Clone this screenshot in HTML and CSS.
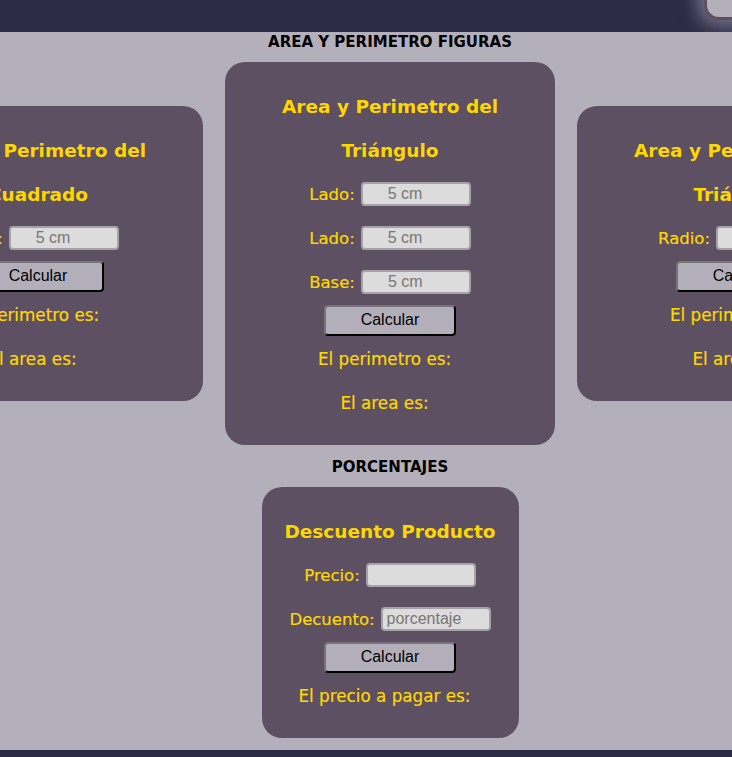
FILE: index.html
```html
<!DOCTYPE html>
<html lang="es">
<head>
<meta charset="utf-8">
<title>Figuras</title>
<link rel="stylesheet" href="styles.css">
</head>
<body>
<header class="topbar">
  <div class="nav-box"></div>
</header>
<main class="page">
  <h1 class="section-title">AREA Y PERIMETRO FIGURAS</h1>
  <div class="row">
    <section class="card">
      <h2 class="card-title">Area y Perimetro del Cuadrado</h2>
      <div class="field"><label>Lado:</label><input class="cm" type="text" placeholder="5 cm"></div>
      <div class="actions"><button class="btn">Calcular</button></div>
      <p class="result">El perimetro es:</p>
      <p class="result">El area es:</p>
    </section>
    <section class="card">
      <h2 class="card-title">Area y Perimetro del Triángulo</h2>
      <div class="field"><label>Lado:</label><input class="cm" type="text" placeholder="5 cm"></div>
      <div class="field"><label>Lado:</label><input class="cm" type="text" placeholder="5 cm"></div>
      <div class="field"><label>Base:</label><input class="cm" type="text" placeholder="5 cm"></div>
      <div class="actions"><button class="btn">Calcular</button></div>
      <p class="result">El perimetro es:</p>
      <p class="result">El area es:</p>
    </section>
    <section class="card">
      <h2 class="card-title">Area y Perimetro del Triángulo</h2>
      <div class="field"><label>Radio:</label><input class="cm" type="text" placeholder="5 cm"></div>
      <div class="actions"><button class="btn">Calcular</button></div>
      <p class="result">El perimetro es:</p>
      <p class="result">El area es:</p>
    </section>
  </div>
  <h1 class="section-title second">PORCENTAJES</h1>
  <div class="row">
    <section class="card small">
      <h2 class="card-title">Descuento Producto</h2>
      <div class="field"><label>Precio:</label><input type="text"></div>
      <div class="field"><label>Decuento:</label><input type="text" placeholder="porcentaje"></div>
      <div class="actions"><button class="btn">Calcular</button></div>
      <p class="result">El precio a pagar es:</p>
    </section>
  </div>
</main>
<footer class="bottombar"></footer>
</body>
</html>
```
FILE: styles.css
```css
html, body {
  margin: 0;
  padding: 0;
  overflow: hidden;
}
body {
  background: #b4b0bb;
  font-family: "DejaVu Sans", "Noto Sans", sans-serif;
  width: 732px;
  height: 757px;
  position: relative;
}
.topbar {
  height: 32px;
  background: #2d2c46;
  position: relative;
  overflow: hidden;
}
.nav-box {
  position: absolute;
  left: 704px;
  top: -30px;
  width: 120px;
  height: 44px;
  border: 3px solid #5c5062;
  border-radius: 15px;
  background: #b4b0bb;
  box-shadow: 0 0 18px 6px rgba(180, 176, 200, 0.55);
}
.page {
  width: 780px;
  display: flex;
  flex-direction: column;
  align-items: center;
}
.section-title {
  margin: 0 0 10px;
  height: 20px;
  line-height: 20px;
  font-size: 15px;
  font-weight: bold;
  color: #000;
  text-align: center;
}
.section-title.second {
  margin-top: 12px;
}
.row {
  width: 780px;
  display: flex;
  justify-content: center;
  align-items: center;
  gap: 22px;
}
.card {
  flex: 0 0 auto;
  width: 330px;
  box-sizing: border-box;
  background: #5c5062;
  border-radius: 20px;
  padding: 22px 20px 21px;
  color: #ffd700;
  text-align: center;
}
.card.small {
  width: 257px;
  padding-left: 10px;
  padding-right: 10px;
}
.card-title {
  margin: 0 auto;
  width: 230px;
  font-size: 18.5px;
  line-height: 44px;
  font-weight: bold;
  padding-top: 1px;
  margin-bottom: -1px;
}
.card.small .card-title {
  width: auto;
}
.field {
  height: 44px;
  display: flex;
  justify-content: center;
  align-items: center;
  gap: 6px;
  font-size: 16.5px;
}
.field label {
  color: #ffd700;
  -webkit-text-stroke: 0.2px #ffd700;
}
.field input {
  box-sizing: border-box;
  width: 110px;
  height: 24px;
  border: 2px solid #a5a2a8;
  border-radius: 4px;
  background: #dcdcdc;
  font-family: "Liberation Sans", Arial, sans-serif;
  font-size: 16px;
  padding: 0 4px;
  color: #333;
  outline: none;
}
.field input::placeholder {
  color: #777;
}
.field input.cm {
  padding-left: 25px;
}
.actions {
  height: 32px;
  display: flex;
  justify-content: center;
  align-items: center;
}
.btn {
  box-sizing: border-box;
  width: 132px;
  height: 31px;
  background: #b3afba;
  border: 2px outset #77737b;
  border-right-color: #2a2a2a;
  border-bottom-color: #2a2a2a;
  border-radius: 4px;
  font-family: "Liberation Sans", Arial, sans-serif;
  font-size: 16px;
  color: #000;
  padding: 0;
}
.result {
  margin: 0;
  height: 44px;
  line-height: 46px;
  font-size: 16.8px;
  padding-right: 11px;
  -webkit-text-stroke: 0.2px #ffd700;
}
.bottombar {
  position: absolute;
  left: 0;
  right: 0;
  top: 750px;
  height: 7px;
  background: #2d2c46;
}
```
